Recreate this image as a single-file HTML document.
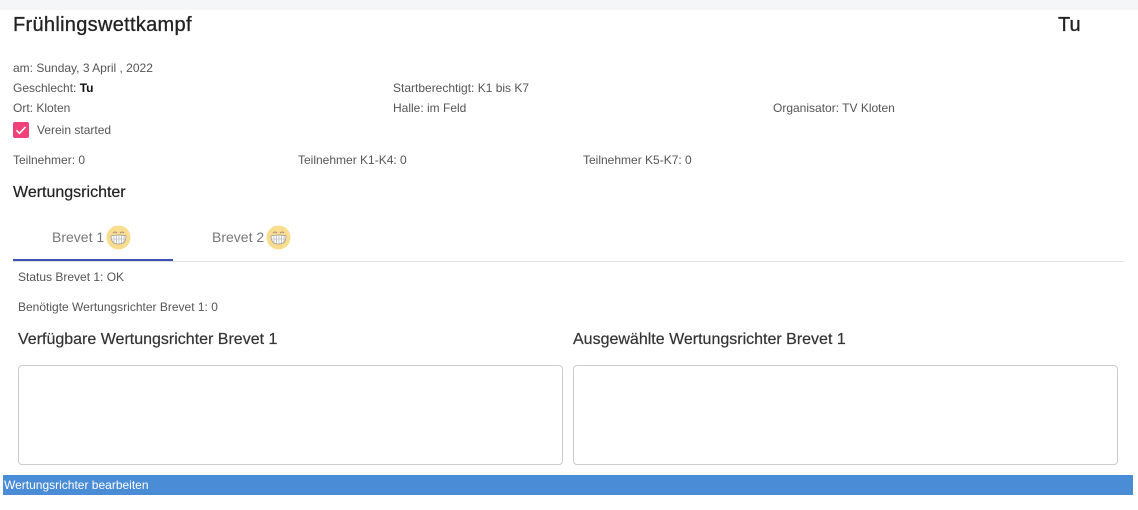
<!DOCTYPE html>
<html><head><meta charset="utf-8"><style>
*{margin:0;padding:0;box-sizing:border-box}
body{width:1138px;height:510px;background:#fff;font-family:"Liberation Sans",sans-serif;position:relative;overflow:hidden;color:#555}
.a{position:absolute;white-space:nowrap}
.s{font-size:12px;color:#555}
.h{color:#222}
.box{position:absolute;border:1px solid #ccc;border-radius:4px;background:#fff}
</style></head><body>
<div class="a" style="left:0;top:0;width:1138px;height:10px;background:#f5f6f8"></div>
<div class="a h" style="left:13px;top:14px;font-size:20px;letter-spacing:0.3px;-webkit-text-stroke:0.3px #222">Frühlingswettkampf</div>
<div class="a h" style="left:1058px;top:14px;font-size:20px;-webkit-text-stroke:0.3px #222">Tu</div>
<div class="a s" style="left:13px;top:61px">am: Sunday, 3 April , 2022</div>
<div class="a s" style="left:13px;top:81px">Geschlecht: <b style="color:#111">Tu</b></div>
<div class="a s" style="left:393px;top:81px">Startberechtigt: K1 bis K7</div>
<div class="a s" style="left:13px;top:101px">Ort: Kloten</div>
<div class="a s" style="left:393px;top:101px">Halle: im Feld</div>
<div class="a s" style="left:773px;top:101px">Organisator: TV Kloten</div>
<div class="a" style="left:13px;top:122px;width:16px;height:16px;background:#f0417a;border-radius:2px">
<svg width="16" height="16"><path d="M3.5 8.3l3 3 6-6.3" stroke="#fff" stroke-width="1.6" fill="none"/></svg></div>
<div class="a s" style="left:37px;top:123px">Verein started</div>
<div class="a s" style="left:13px;top:153px">Teilnehmer: 0</div>
<div class="a s" style="left:298px;top:153px">Teilnehmer K1-K4: 0</div>
<div class="a s" style="left:583px;top:153px">Teilnehmer K5-K7: 0</div>
<div class="a h" style="left:13px;top:184px;font-size:16px;-webkit-text-stroke:0.2px #222">Wertungsrichter</div>
<div class="a" style="left:52px;top:229px;font-size:14px;color:#777">Brevet 1</div>
<svg class="a" style="left:106px;top:225px" width="25" height="25"><circle cx="12.5" cy="12.5" r="12" fill="#f9dd8e"/><path d="M5 11q7.5-2 15 0q0 8-7.5 8t-7.5-8z" fill="#fff" stroke="#999" stroke-width=".8"/><path d="M5.5 14h14M8 11v7M10.5 10.5v8M13 10.5v8M15.5 10.5v8M18 11v6" stroke="#aaa" stroke-width=".6"/><path d="M7 8q2-2 4 0M14 8q2-2 4 0" stroke="#a88" stroke-width="1" fill="none"/></svg>
<div class="a" style="left:212px;top:229px;font-size:14px;color:#777">Brevet 2</div>
<svg class="a" style="left:266px;top:225px" width="25" height="25"><circle cx="12.5" cy="12.5" r="12" fill="#f9dd8e"/><path d="M5 11q7.5-2 15 0q0 8-7.5 8t-7.5-8z" fill="#fff" stroke="#999" stroke-width=".8"/><path d="M5.5 14h14M8 11v7M10.5 10.5v8M13 10.5v8M15.5 10.5v8M18 11v6" stroke="#aaa" stroke-width=".6"/><path d="M7 8q2-2 4 0M14 8q2-2 4 0" stroke="#a88" stroke-width="1" fill="none"/></svg>
<div class="a" style="left:13px;top:261px;width:1110px;height:1px;background:#ddd"></div>
<div class="a" style="left:13px;top:259px;width:160px;height:2px;background:#3f51b5"></div>
<div class="a s" style="left:18px;top:270px">Status Brevet 1: OK</div>
<div class="a s" style="left:18px;top:300px">Benötigte Wertungsrichter Brevet 1: 0</div>
<div class="a h" style="left:18px;top:331px;font-size:16px;color:#333;-webkit-text-stroke:0.2px #333">Verfügbare Wertungsrichter Brevet 1</div>
<div class="a h" style="left:573px;top:331px;font-size:16px;color:#333;-webkit-text-stroke:0.2px #333">Ausgewählte Wertungsrichter Brevet 1</div>
<div class="box" style="left:18px;top:365px;width:545px;height:100px"></div>
<div class="box" style="left:573px;top:365px;width:545px;height:100px"></div>
<div class="a" style="left:3px;top:475px;width:1130px;height:20px;background:#4a8cd6;color:#fff;font-size:12px;line-height:20px;padding-left:1px">Wertungsrichter bearbeiten</div>
</body></html>
